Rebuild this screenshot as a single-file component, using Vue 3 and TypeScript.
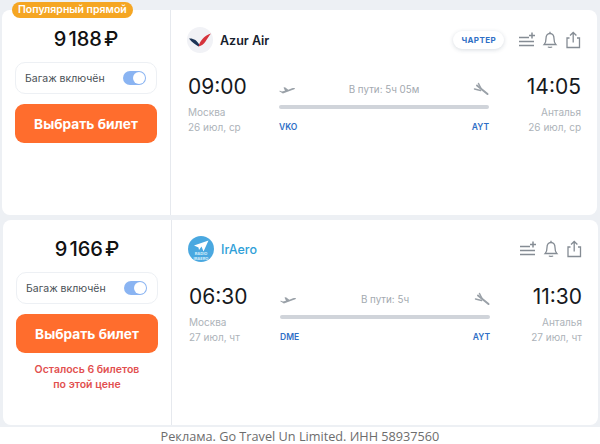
<script setup lang="ts">
interface Ticket {
  whole: string
  rest: string
  airline: string
  airlineBlue: boolean
  charter: boolean
  dep: string
  arr: string
  date: string
  duration: string
  from: string
  to: string
  note: boolean
}
const tickets: Ticket[] = [
  { whole: '9', rest: '188', airline: 'Azur Air', airlineBlue: false, charter: true, dep: '09:00', arr: '14:05', date: '26 июл, ср', duration: 'В пути: 5ч 05м', from: 'VKO', to: 'AYT', note: false },
  { whole: '9', rest: '166', airline: 'IrAero', airlineBlue: true, charter: false, dep: '06:30', arr: '11:30', date: '27 июл, чт', duration: 'В пути: 5ч', from: 'DME', to: 'AYT', note: true },
]
</script>

<template>
  <div class="page">
    <div class="list">
      <article v-for="(t, i) in tickets" :key="t.airline" class="card" :class="{ second: i === 1 }">
        <span v-if="i === 0" class="badge">Популярный прямой</span>
        <aside class="buy">
          <div class="price"><span class="whole">{{ t.whole }}</span>{{ t.rest }}<span class="rub">₽</span></div>
          <div class="bag">
            <span>Багаж включён</span>
            <span class="switch"><i></i></span>
          </div>
          <button class="cta">Выбрать билет</button>
          <p v-if="t.note" class="note">Осталось 6 билетов<br />по этой цене</p>
        </aside>
        <section class="info">
          <header class="head">
            <svg v-if="!t.airlineBlue" class="logo" viewBox="0 0 26 26">
              <circle cx="13" cy="13" r="13" fill="#f1f2f6" />
              <path d="M2 11.500c4-.5 8 1.500 10.500 6.500l-1 1.500C8.500 17.500 5 15.500 2 11.500z" fill="#1d3557" />
              <path d="M11.500 19.500C13 14 16.500 9 24 6.500c-2 2-3.500 5-5.500 8-1.500 2.500-4 4.500-7 5z" fill="#d5333c" />
            </svg>
            <svg v-else class="logo" viewBox="0 0 26 26">
              <circle cx="13" cy="13" r="13" fill="#4aa8e0" />
              <path d="M6 9.500 20.500 4.500 15.500 15.500 13.500 10.500 11 14 10.500 11.500z" fill="#fff" />
              <text x="13" y="19" class="logo-text">RADIO</text>
              <text x="13" y="23.500" class="logo-text">IRAERO</text>
            </svg>
            <span class="airline" :class="{ blue: t.airlineBlue }">{{ t.airline }}</span>
            <span class="spacer"></span>
            <span v-if="t.charter" class="charter">ЧАРТЕР</span>
            <div class="actions">
              <svg viewBox="0 0 18 18" width="18" height="18" fill="none" stroke="#858c94" stroke-width="1.300">
                <path d="M1 6.500h10M1 10.500h15M1 14.500h15" />
                <path d="M14 1.500v6M11 4.500h6" stroke-width="1.500" />
              </svg>
              <svg viewBox="0 0 18 18" width="18" height="18" fill="none" stroke="#858c94" stroke-width="1.300">
                <path d="M9 2.500c-2.700 0-4 2.300-4 5 0 3-.6 4.800-1.800 6h11.600c-1.200-1.200-1.800-3-1.800-6 0-2.700-1.300-5-4-5z" />
                <path d="M9 .8v1.700M7 15.700c.5 1 3.500 1 4 0" />
              </svg>
              <svg viewBox="0 0 18 18" width="18" height="18" fill="none" stroke="#858c94" stroke-width="1.300">
                <path d="M5.500 7H3v9.500h12.500V7H13" />
                <path d="M9.200 11.500V1.500M6 4.500l3.200-3 3.200 3" />
              </svg>
            </div>
          </header>
          <div class="flight">
            <div class="side">
              <div class="time">{{ t.dep }}</div>
              <div class="city">Москва</div>
              <div class="city">{{ t.date }}</div>
            </div>
            <div class="route">
              <div class="route-top">
                <svg viewBox="0 0 16 12" width="16" height="12" fill="#9aa1a8">
                  <path d="M0 8 1 7.700l2 .8 3-.8L4.500 4.500 6 4.200l3.300 2.500L13 5.300c1.300-.5 2.700-.5 2.900 0 .2.500-.7 1-2 1.500l-10 3.700z" />
                </svg>
                <span class="duration">{{ t.duration }}</span>
                <svg viewBox="0 0 16 14" width="16" height="14" fill="none" stroke="#9aa1a8" stroke-linecap="round">
                  <path d="M4 3.500 14.500 12" stroke-width="2" />
                  <path d="M5.500 1.500 8 6.500M1.500 7l6 1.500" stroke-width="1.500" />
                </svg>
              </div>
              <div class="bar"></div>
              <div class="codes"><span>{{ t.from }}</span><span>{{ t.to }}</span></div>
            </div>
            <div class="side right">
              <div class="time">{{ t.arr }}</div>
              <div class="city">Анталья</div>
              <div class="city">{{ t.date }}</div>
            </div>
          </div>
        </section>
      </article>
    </div>
    <footer class="ad">Реклама. Go Travel Un Limited. ИНН 58937560</footer>
  </div>
</template>

<style scoped>
.page {
  width: 600px;
  height: 444px;
  overflow: hidden;
  background: #fff;
  font-family: Inter, "Liberation Sans", sans-serif;
}
.list {
  background: #edf0f4;
  padding: 10px 0 2px;
  display: flex;
  flex-direction: column;
  gap: 5px;
}
.card {
  position: relative;
  height: 205px;
  margin: 0 3px 0 2px;
  background: #fff;
  border-radius: 8px;
  display: flex;
}
.card.second {
  margin: 0 2px 0 3px;
}
.badge {
  position: absolute;
  left: 10px;
  top: -8px;
  height: 16px;
  line-height: 16px;
  padding: 0 6px;
  border-radius: 8px;
  background: #f5a623;
  color: #fff;
  font-size: 10.500px;
  font-weight: 600;
  white-space: nowrap;
}
.buy {
  width: 169px;
  box-sizing: border-box;
  border-right: 1px solid #e6e9ee;
  padding: 0 13px;
  flex: none;
}
.price {
  text-align: center;
  font-size: 20px;
  font-weight: 500;
  color: #111;
  line-height: 26px;
  margin-top: 16px;
}
.whole {
  margin-right: 2px;
}
.rub {
  margin-left: 2px;
}
.bag {
  margin-top: 10px;
  height: 32px;
  box-sizing: border-box;
  border: 1px solid #edf0f4;
  border-radius: 10px;
  display: flex;
  align-items: center;
  justify-content: space-between;
  padding: 0 10px 0 9px;
  font-size: 10.500px;
  color: #4a5056;
}
.switch {
  width: 23px;
  height: 14px;
  border-radius: 7px;
  background: #8ab4f2;
  display: flex;
  justify-content: flex-end;
  align-items: center;
  padding-right: 1px;
  box-sizing: border-box;
}
.switch i {
  width: 12px;
  height: 12px;
  border-radius: 50%;
  background: #fff;
}
.cta {
  display: block;
  margin-top: 10px;
  width: 100%;
  height: 39px;
  border: 0;
  border-radius: 9px;
  background: #ff6d2d;
  color: #fff;
  font-family: inherit;
  font-size: 13.700px;
  font-weight: 700;
}
.note {
  margin: 10px 0 0;
  text-align: center;
  font-size: 10.500px;
  font-weight: 600;
  line-height: 14.500px;
  color: #e2504f;
}
.info {
  flex: 1;
  min-width: 0;
  padding: 0 16px 0 17px;
}
.head {
  display: flex;
  align-items: center;
  height: 26px;
  margin: 17px 0 0 -1px;
}
.second .head {
  margin-top: 16px;
}
.logo {
  width: 26px;
  height: 26px;
  flex: none;
}
.logo-text {
  font-size: 4px;
  font-weight: 700;
  fill: #d8effb;
  text-anchor: middle;
}
.airline {
  margin-left: 7px;
  font-size: 12.500px;
  font-weight: 600;
  color: #16202c;
}
.airline.blue {
  color: #2f9fd8;
  font-weight: 500;
}
.spacer {
  flex: 1;
}
.charter {
  height: 18px;
  line-height: 18px;
  padding: 0 8px;
  margin-right: 14px;
  border-radius: 9px;
  background: #fff;
  box-shadow: 0 1px 4px rgba(40, 60, 90, 0.18);
  color: #2f6fc6;
  font-size: 8px;
  font-weight: 700;
  letter-spacing: 0.4px;
}
.actions {
  display: flex;
  gap: 5px;
  margin-right: -1px;
}
.flight {
  display: grid;
  grid-template-columns: 91px 1fr 92px;
  margin-top: 20px;
}
.second .flight {
  margin-top: 21px;
}
.time {
  font-size: 21px;
  line-height: 28px;
  color: #16191d;
}
.city {
  font-size: 10px;
  line-height: 15px;
  color: #adb3b9;
}
.time + .city {
  margin-top: 4px;
}
.right {
  text-align: right;
}
.route-top {
  display: flex;
  align-items: center;
  justify-content: space-between;
  height: 16px;
  margin-top: 8px;
}
.duration {
  font-size: 9.800px;
  color: #a3a9af;
}
.bar {
  height: 4px;
  border-radius: 2px;
  background: #d0d4da;
  margin-top: 8px;
}
.codes {
  display: flex;
  justify-content: space-between;
  margin-top: 13px;
  font-size: 8.500px;
  font-weight: 600;
  color: #2f6fc6;
}
.ad {
  text-align: center;
  font-family: "Open Sans", sans-serif;
  font-size: 12.700px;
  line-height: 15px;
  color: #6d6d6d;
  padding-top: 2px;
}
</style>
